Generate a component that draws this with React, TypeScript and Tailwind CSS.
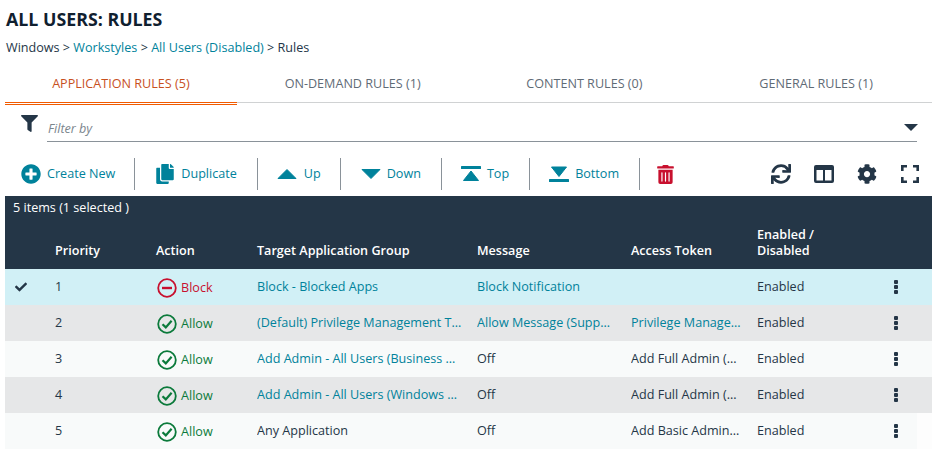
import { FaCheck, FaCog, FaCopy, FaFilter, FaPlusCircle, FaSync, FaTrashAlt } from "react-icons/fa";

const font = { fontFamily: '"Open Sans", sans-serif' };

const tabs = [
	{ label: "APPLICATION RULES (5)", active: true },
	{ label: "ON-DEMAND RULES (1)" },
	{ label: "CONTENT RULES (0)" },
	{ label: "GENERAL RULES (1)" },
];

const rows = [
	{ n: 1, action: "Block", target: "Block - Blocked Apps", targetLink: true, message: "Block Notification", messageLink: true, token: "", tokenLink: false, bg: "bg-[#d1f0f6]" },
	{ n: 2, action: "Allow", target: "(Default) Privilege Management Tasks", targetLink: true, message: "Allow Message (Support Desk)", messageLink: true, token: "Privilege Management Support", tokenLink: true, bg: "bg-[#e6e7e8]" },
	{ n: 3, action: "Allow", target: "Add Admin - All Users (Business Apps)", targetLink: true, message: "Off", messageLink: false, token: "Add Full Admin (Required)", tokenLink: false, bg: "bg-[#f8fafa]" },
	{ n: 4, action: "Allow", target: "Add Admin - All Users (Windows Functions)", targetLink: true, message: "Off", messageLink: false, token: "Add Full Admin (Required)", tokenLink: false, bg: "bg-[#e6e7e8]" },
	{ n: 5, action: "Allow", target: "Any Application", targetLink: false, message: "Off", messageLink: false, token: "Add Basic Admin Rights", tokenLink: false, bg: "bg-[linear-gradient(to_right,#f8fafa_912px,#fdfdfd_912px)]" },
];

const grid = "grid grid-cols-[50px_101px_101px_220px_154px_126px_1fr]";

function Sep() {
	return <div className="mx-[19px] h-8 w-px bg-[#8a9299]" />;
}

function UpIcon() {
	return (
		<svg width="20" height="12" viewBox="0 0 20 12" className="fill-[#00829b]">
			<path d="M10 1.5 L19 10.5 H1 Z" stroke="#00829b" strokeWidth="1" strokeLinejoin="round" />
		</svg>
	);
}

function DownIcon() {
	return (
		<svg width="20" height="12" viewBox="0 0 20 12" className="fill-[#00829b]">
			<path d="M1 1.5 H19 L10 10.5 Z" stroke="#00829b" strokeWidth="1" strokeLinejoin="round" />
		</svg>
	);
}

function TopIcon() {
	return (
		<svg width="20" height="16" viewBox="0 0 20 16" className="fill-[#00829b]">
			<rect x="0" y="0" width="20" height="3" rx="0.5" />
			<path d="M10 5 L17.5 14.5 H2.5 Z" stroke="#00829b" strokeWidth="1" strokeLinejoin="round" />
		</svg>
	);
}

function BottomIcon() {
	return (
		<svg width="20" height="16" viewBox="0 0 20 16" className="fill-[#00829b]">
			<path d="M2.5 1 H17.5 L10 10.5 Z" stroke="#00829b" strokeWidth="1" strokeLinejoin="round" />
			<rect x="0" y="13" width="20" height="3" rx="0.5" />
		</svg>
	);
}

function ColumnsIcon() {
	return (
		<svg width="20" height="18" viewBox="0 0 20 18" className="fill-[#243647]">
			<path fillRule="evenodd" d="M2 0 H18 A2 2 0 0 1 20 2 V16 A2 2 0 0 1 18 18 H2 A2 2 0 0 1 0 16 V2 A2 2 0 0 1 2 0 Z M2.5 5 V15.5 H9 V5 Z M11 5 V15.5 H17.5 V5 Z" />
		</svg>
	);
}

function FullscreenIcon() {
	return (
		<svg width="18" height="18" viewBox="0 0 18 18" fill="none" stroke="#243647" strokeWidth="2.6" className="ml-px">
			<path d="M1.3 6 V1.3 H6 M12 1.3 H16.7 V6 M16.7 12 V16.7 H12 M6 16.7 H1.3 V12" />
		</svg>
	);
}

function BlockIcon() {
	return (
		<svg width="20" height="20" viewBox="0 0 20 20" fill="none" stroke="#c8102e" strokeWidth="1.8">
			<circle cx="10" cy="10" r="8.8" />
			<path d="M5 10 H15" strokeWidth="2.4" />
		</svg>
	);
}

function AllowIcon() {
	return (
		<svg width="20" height="20" viewBox="0 0 20 20" fill="none" stroke="#0b7a3b" strokeWidth="1.8">
			<circle cx="10" cy="10" r="8.8" />
			<path d="M5.5 10.2 L8.8 13.4 L14.6 6.8" strokeWidth="2.2" />
		</svg>
	);
}

function Kebab() {
	return (
		<div className="flex flex-col gap-px">
			<div className="h-[4px] w-[4px] rounded-[1px] bg-[#243647]" />
			<div className="h-[4px] w-[4px] rounded-[1px] bg-[#243647]" />
			<div className="h-[4px] w-[4px] rounded-[1px] bg-[#243647]" />
		</div>
	);
}

function ToolButton({ icon, label, gap, className = "" }: { icon: React.ReactNode; label: string; gap: string; className?: string }) {
	return (
		<div className={`flex items-center ${gap} ${className} text-[#00829b]`}>
			{icon}
			<span>{label}</span>
		</div>
	);
}

export default function App() {
	return (
		<div style={font} className="h-[449px] w-[932px] overflow-hidden bg-white pl-[5px] text-[12.6px] text-[#243647]">
			<h1 className="pl-px pt-[7px] text-[17.8px] leading-[24px] font-bold text-[#10202f]">ALL USERS: RULES</h1>
			<div className="mt-[7px] pl-px leading-[20px]">
				Windows &gt; <span className="text-[#00829b]">Workstyles</span> &gt;{" "}
				<span className="text-[#00829b]">All Users (Disabled)</span> &gt; Rules
			</div>

			<div className="grid h-[45px] grid-cols-4 border-b border-[#d0d2d3]">
				{tabs.map((tab) => (
					<div
						key={tab.label}
						className={
							tab.active
								? "-mb-[3px] flex items-center justify-center border-b-[3px] border-double border-[#f15a00] pt-[9px] text-[#c8501e]"
								: "flex items-center justify-center pt-[9px] text-[#5f6b76]"
						}
					>
						{tab.label}
					</div>
				))}
			</div>

			<div className="mt-[11px] flex h-[29px] items-start pl-[16px] pr-[15px]">
				<FaFilter className="mt-px h-[17px] w-[17px] text-[#243647]" />
				<div className="ml-[9px] flex h-[28px] flex-1 items-center justify-between border-b border-[#8a9299] pl-px">
					<span className="pt-[3px] text-[#7b858d] italic">Filter by</span>
					<div className="mt-0 mr-[-1px] h-0 w-0 border-x-[7px] border-t-[7px] border-x-transparent border-t-[#243647]" />
				</div>
			</div>

			<div className="mt-[15px] flex h-[32px] items-center pl-[16px]">
				<ToolButton gap="gap-[6px]" icon={<FaPlusCircle className="h-[20px] w-[20px]" />} label="Create New" />
				<Sep />
				<ToolButton gap="gap-[7px]" className="mr-px" icon={<FaCopy className="ml-[2px] h-[20px] w-[18px]" />} label="Duplicate" />
				<Sep />
				<ToolButton gap="gap-[7px]" icon={<UpIcon />} label="Up" />
				<Sep />
				<ToolButton gap="gap-[6px]" className="mx-px" icon={<DownIcon />} label="Down" />
				<Sep />
				<ToolButton gap="gap-[6px]" className="mr-px" icon={<TopIcon />} label="Top" />
				<Sep />
				<ToolButton gap="gap-[6px]" className="mr-px" icon={<BottomIcon />} label="Bottom" />
				<Sep />
				<FaTrashAlt className="-ml-[2px] h-[19px] w-[17px] text-[#c8102e]" />
				<div className="ml-auto flex items-center gap-[23px] pr-[13px]">
					<FaSync className="h-[20px] w-[20px] text-[#243647]" />
					<ColumnsIcon />
					<FaCog className="h-[20px] w-[20px] text-[#243647]" />
					<FullscreenIcon />
				</div>
			</div>

			<div className="mt-[6px] bg-[#243647] text-white">
				<div className="h-[27px] pl-[8px] pt-[2px] leading-[20px]">5 items (1 selected )</div>
				<div className={`${grid} h-[46px] items-end pb-[10px] leading-[16px] font-semibold`}>
					<div />
					<div>Priority</div>
					<div>Action</div>
					<div>Target Application Group</div>
					<div>Message</div>
					<div>Access Token</div>
					<div>
						Enabled /<br />
						Disabled
					</div>
				</div>
			</div>

			{rows.map((row) => (
				<div key={row.n} className={`${grid} h-[36px] items-center ${row.bg}`}>
					<div className="pl-[9px]">{row.n === 1 && <FaCheck className="h-[12px] w-[14px]" />}</div>
					<div>{row.n}</div>
					<div className={`ml-px flex items-center gap-[4px] pt-px ${row.action === "Block" ? "text-[#c8102e]" : "text-[#0b7a3b]"}`}>
						{row.action === "Block" ? <BlockIcon /> : <AllowIcon />}
						<span className="pt-px">{row.action}</span>
					</div>
					<div className={`truncate pr-[14px] ${row.targetLink ? "text-[#00829b]" : ""}`}>{row.target}</div>
					<div className={`truncate pr-[16px] ${row.messageLink ? "text-[#00829b]" : ""}`}>{row.message}</div>
					<div className={`truncate pr-[15px] ${row.tokenLink ? "text-[#00829b]" : ""}`}>{row.token}</div>
					<div className="flex items-center justify-between pr-[34px]">
						<span>Enabled</span>
						<Kebab />
					</div>
				</div>
			))}
		</div>
	);
}
